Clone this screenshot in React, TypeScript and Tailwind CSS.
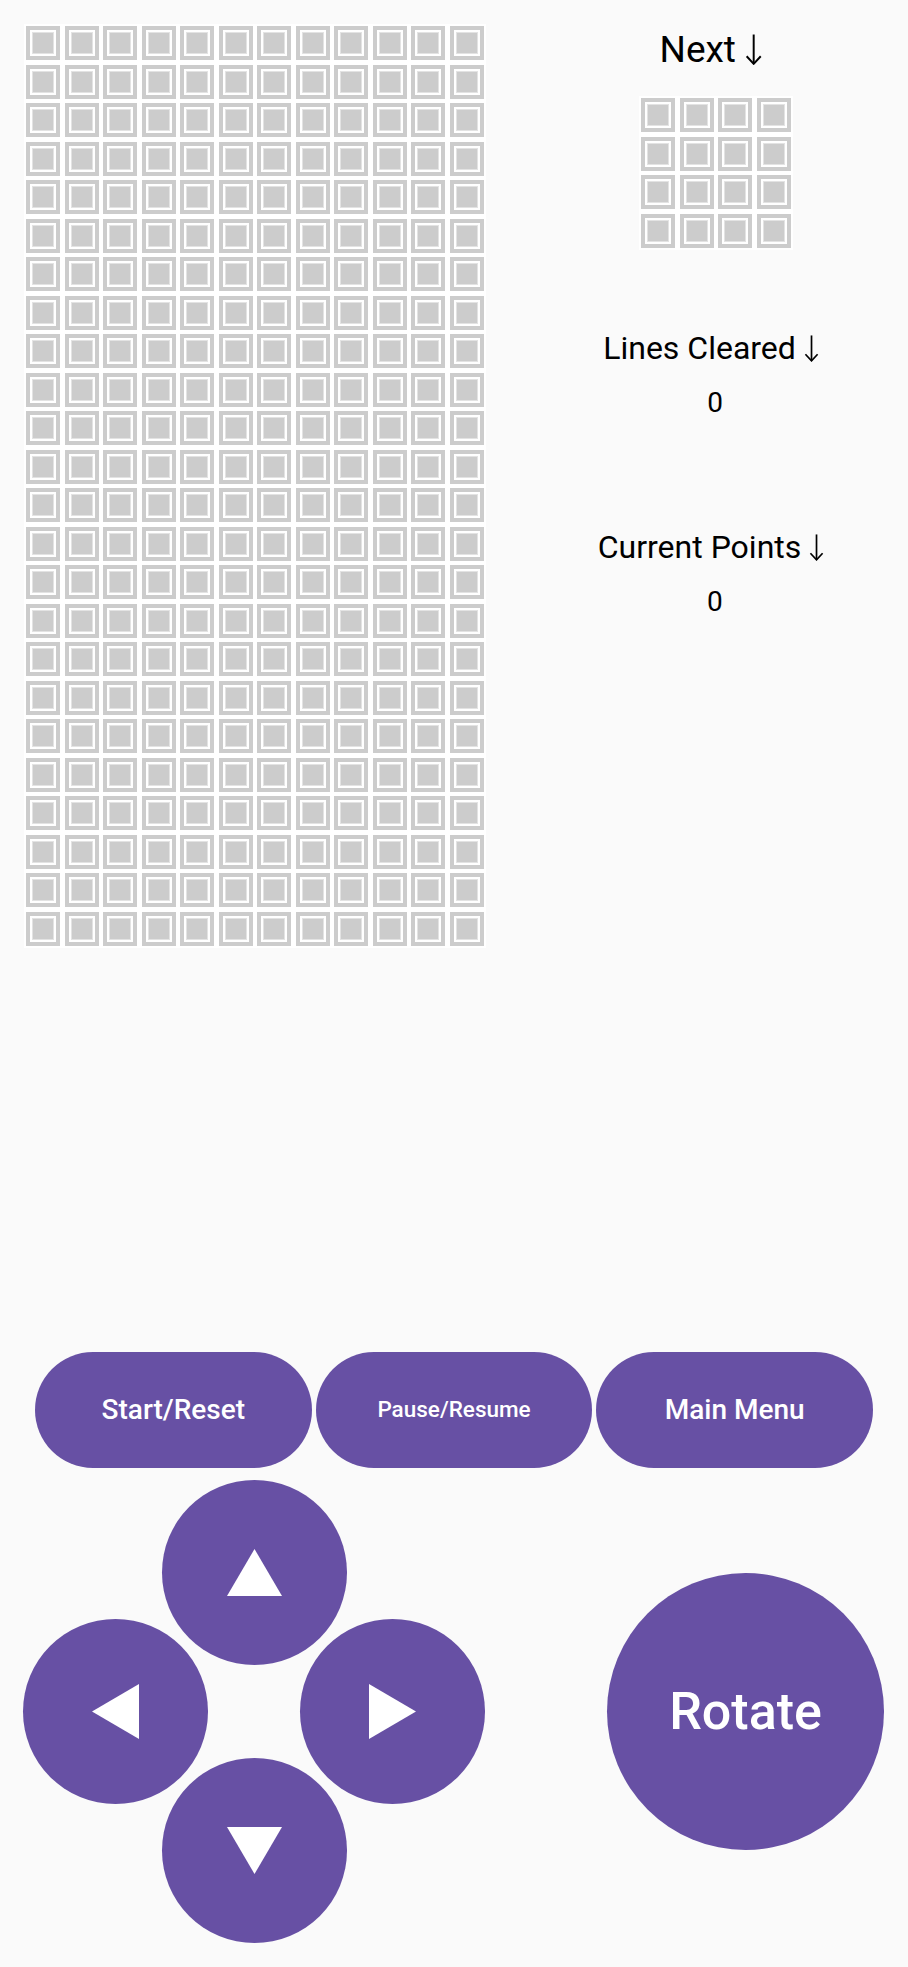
const ROWS = 24;
const COLS = 12;

const Cell = () => (
  <div className="w-[38.5px] h-[38.5px] flex items-center justify-center">
    <div className="w-[34px] h-[34px] border-4 border-[#cccccc] bg-white flex items-center justify-center">
      <div className="w-[22px] h-[22px] border border-[#e3e3e3] bg-[#cccccc]" />
    </div>
  </div>
);

const Board = ({ rows, cols }: { rows: number; cols: number }) => (
  <div className="bg-white flex flex-col">
    {Array.from({ length: rows }).map((_, r) => (
      <div key={r} className="flex">
        {Array.from({ length: cols }).map((_, c) => (
          <Cell key={c} />
        ))}
      </div>
    ))}
  </div>
);

const Triangle = ({ dir }: { dir: "up" | "down" | "left" | "right" }) => {
  const points = {
    up: "27.5,0 55,47 0,47",
    down: "0,0 55,0 27.5,47",
    left: "0,27.5 47,0 47,55",
    right: "0,0 47,27.5 0,55",
  }[dir];
  const size = dir === "up" || dir === "down" ? { w: 55, h: 47 } : { w: 47, h: 55 };
  return (
    <svg width={size.w} height={size.h} viewBox={`0 0 ${size.w} ${size.h}`}>
      <polygon points={points} fill="#ffffff" />
    </svg>
  );
};

const PadButton = ({ dir, className = "" }: { dir: "up" | "down" | "left" | "right"; className?: string }) => (
  <button className={`w-[185px] h-[185px] rounded-full bg-[#6750a4] flex items-center justify-center shrink-0 ${className}`}>
    <Triangle dir={dir} />
  </button>
);

// tall thin down arrow used after the labels
const Arrow = () => (
  <svg
    viewBox="0 0 16 30"
    className="inline-block w-[0.47em] h-[0.84em] align-[-0.09em]"
    fill="none"
    stroke="currentColor"
    strokeWidth={1.9}
  >
    <path d="M8 0.5 V28.5" />
    <path d="M1.2 21.5 L8 28.8 L14.8 21.5" />
  </svg>
);

const Stat = ({ label, value }: { label: string; value: string }) => (
  <div className="flex flex-col items-center">
    <div className="mr-[8px] text-[32px] leading-none text-black">
      {label} <Arrow />
    </div>
    <div className="mt-[25px] text-[28px] leading-none text-black">{value}</div>
  </div>
);

export default function App() {
  return (
    <div className="h-[1967px] w-full bg-[#fafafa] flex flex-col font-['Roboto',sans-serif]">
      <div className="flex">
        <div className="ml-[24px] mt-[24px]">
          <Board rows={ROWS} cols={COLS} />
        </div>
        <div className="flex-1 ml-[36px] pt-[31px] flex flex-col items-center">
          <div className="mr-[8px] text-[37px] leading-none text-black">
            Next <Arrow />
          </div>
          <div className="mt-[28px] ml-[2px]">
            <Board rows={4} cols={4} />
          </div>
          <div className="mt-[82px]">
            <Stat label="Lines Cleared" value="0" />
          </div>
          <div className="mt-[114px]">
            <Stat label="Current Points" value="0" />
          </div>
        </div>
      </div>

      <div className="mt-auto pb-[24px] flex flex-col">
        <div className="flex gap-[4px] px-[35px]">
          <button className="flex-1 h-[116px] rounded-full bg-[#6750a4] text-white text-[28px] font-medium">
            Start/Reset
          </button>
          <button className="flex-1 h-[116px] rounded-full bg-[#6750a4] text-white text-[22.5px] font-medium">
            Pause/Resume
          </button>
          <button className="flex-1 h-[116px] rounded-full bg-[#6750a4] text-white text-[28px] font-medium">
            Main Menu
          </button>
        </div>

        <div className="mt-[12px] flex items-center pl-[23px] pr-[24px]">
          <div className="w-[462px] flex flex-col items-center">
            <PadButton dir="up" />
            <div className="-mt-[46px] flex gap-[92px]">
              <PadButton dir="left" />
              <PadButton dir="right" />
            </div>
            <PadButton dir="down" className="-mt-[46px]" />
          </div>
          <button className="ml-auto w-[277px] h-[277px] rounded-full bg-[#6750a4] text-white text-[52px] font-medium">
            Rotate
          </button>
        </div>
      </div>
    </div>
  );
}
